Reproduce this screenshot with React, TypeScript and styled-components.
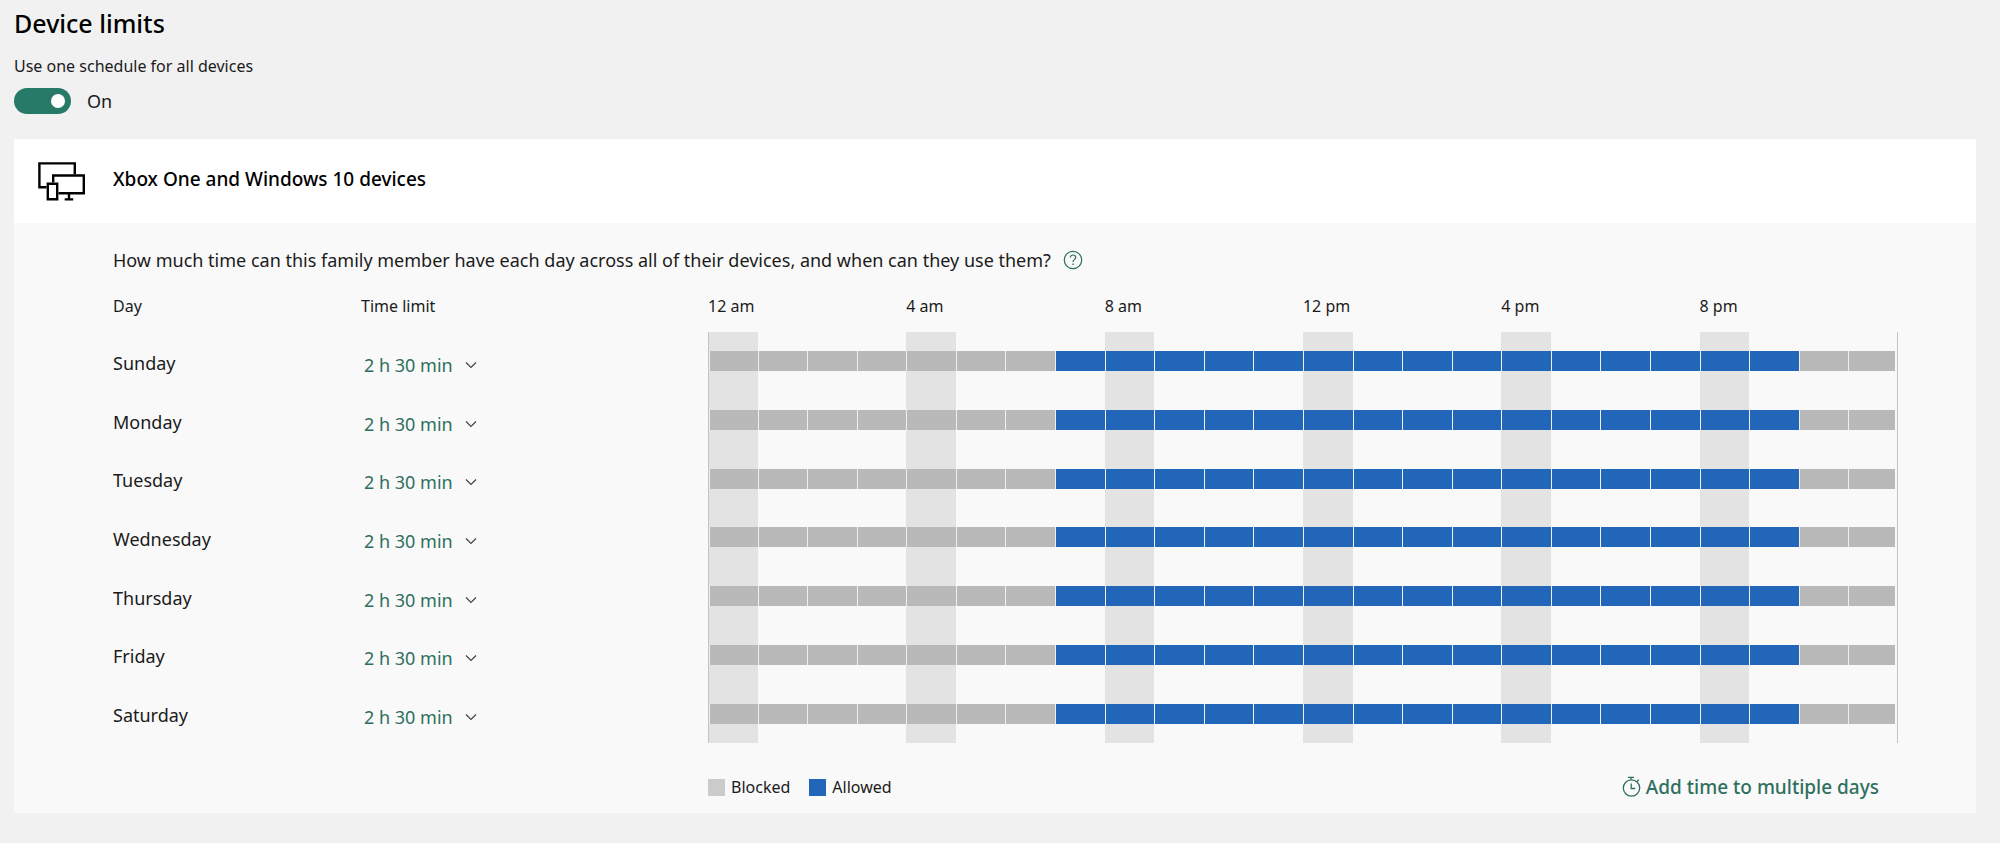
import React, { useState } from 'react';
import styled, { createGlobalStyle } from 'styled-components';

const color = {
  page: '#f1f1f1',
  panel: '#f9f9f9',
  text: '#1b1b1b',
  green: '#2f6f60',
  toggle: '#277a68',
  blocked: '#b9b9b9',
  allowed: '#2266ba',
  stripe: '#e3e3e3',
  rule: '#c4c4c4',
};

const DAY_WIDTH = 248;
const LIMIT_WIDTH = 347;

const GlobalStyle = createGlobalStyle`
  *, *::before, *::after { box-sizing: border-box; }
  body {
    margin: 0;
    background: ${color.page};
    color: ${color.text};
    font: 400 18px/24px "Noto Sans", "Open Sans", sans-serif;
  }
  button, select, input { font: inherit; }
`;

const Page = styled.main`
  padding: 7px 24px 30px 14px;
`;

const Title = styled.h1`
  margin: 0 0 15px;
  color: #000;
  font-size: 25px;
  line-height: 32px;
  font-weight: 500;
`;

const ToggleLabel = styled.label`
  display: block;
  font-size: 16px;
`;

const ToggleRow = styled.div`
  display: flex;
  align-items: center;
  gap: 16px;
  margin: 10px 0 25px;
`;

const Toggle = styled.input`
  appearance: none;
  display: flex;
  align-items: center;
  justify-content: flex-end;
  width: 57px;
  height: 26px;
  margin: 0;
  padding: 0 6px;
  border-radius: 13px;
  background: #8a8a8a;
  cursor: pointer;

  &::before {
    content: '';
    width: 14px;
    height: 14px;
    border-radius: 50%;
    background: #fff;
  }
  &:checked { background: ${color.toggle}; }
  &:not(:checked) { justify-content: flex-start; }
`;

const Card = styled.section`
  background: ${color.panel};
`;

const CardHeader = styled.header`
  display: flex;
  align-items: center;
  gap: 27px;
  height: 84px;
  padding: 0 24px;
  background: #fff;
`;

const CardTitle = styled.h2`
  margin: 0 0 4px;
  color: #000;
  font-size: 19px;
  line-height: 24px;
  font-weight: 500;
`;

const CardBody = styled.div`
  padding: 25px 78px 14px 99px;
`;

const Question = styled.div`
  display: flex;
  align-items: center;
  gap: 12px;
`;

const QuestionText = styled.p`
  margin: 0;
`;

const HelpButton = styled.button`
  display: flex;
  padding: 0;
  border: 0;
  background: none;
  color: ${color.green};
  cursor: pointer;
`;

const Schedule = styled.table`
  width: 100%;
  height: 471px;
  table-layout: fixed;
  border-collapse: separate;
  border-spacing: 0;
`;

const Column = styled.col<{ $width?: number }>`
  width: ${(p) => (p.$width ? `${p.$width}px` : 'auto')};
`;

const HeadCell = styled.th`
  height: 60px;
  padding: 8px 0 0;
  font-size: 16px;
  font-weight: 400;
  text-align: left;
`;

const DayCell = styled.th`
  padding: 3px 0 0;
  font-weight: 400;
  text-align: left;
`;

const LimitCell = styled.td`
  padding: 7px 0 0 3px;
`;

const SelectWrap = styled.span`
  display: inline-flex;
  align-items: center;
  color: ${color.green};
`;

const LimitSelect = styled.select`
  appearance: none;
  width: 116px;
  height: 24px;
  margin: 0 -15px 0 0;
  padding: 0;
  border: 0;
  background: none;
  color: inherit;
  cursor: pointer;
`;

const Chevron = styled.svg`
  pointer-events: none;
`;

const HourCell = styled.td<{ $striped: boolean }>`
  padding: 0;
  background: ${(p) => (p.$striped ? color.stripe : 'transparent')};

  &:nth-of-type(2) { border-left: 1px solid ${color.rule}; }
  &:last-child { padding-right: 2px; border-right: 1px solid ${color.rule}; }
`;

const HourBar = styled.div<{ $allowed: boolean }>`
  height: 20px;
  border-left: 1px solid #efefef;
  background: ${(p) => (p.$allowed ? color.allowed : color.blocked)};
`;

const Footer = styled.footer`
  display: flex;
  justify-content: space-between;
  align-items: center;
  padding: 32px 19px 0 ${DAY_WIDTH + LIMIT_WIDTH}px;
`;

const Legend = styled.ul`
  display: flex;
  gap: 19px;
  margin: 0;
  padding: 0;
  list-style: none;
  font-size: 16px;
`;

const LegendItem = styled.li<{ $color: string }>`
  display: flex;
  align-items: center;
  gap: 6px;

  &::before {
    content: '';
    width: 17px;
    height: 17px;
    background: ${(p) => p.$color};
  }
`;

const AddTime = styled.button`
  display: flex;
  align-items: center;
  gap: 5px;
  padding: 0;
  border: 0;
  background: none;
  color: ${color.green};
  font-size: 19px;
  line-height: 24px;
  font-weight: 500;
  cursor: pointer;
`;

const DevicesIcon = () => (
  <svg width="48" height="40" viewBox="0 0 48 40" fill="none" stroke="#000" strokeWidth="2.4" aria-hidden="true">
    <path d="M8.5 26.2H1.4V2.4H36.8V13.5" />
    <path d="M15.2 21.5V14.5H45.8V32.2H20.5" />
    <path d="M9.8 22.7H19.2V38.2H9.8Z" />
    <path d="M31 32.5V38.2M26.7 38.4H35.2" />
  </svg>
);

const HelpIcon = () => (
  <svg width="20" height="20" viewBox="0 0 20 20" fill="none" stroke="currentColor" strokeWidth="1.2" aria-hidden="true">
    <circle cx="10" cy="10" r="8.7" />
    <path d="M7.3 7.6C7.3 6 8.5 5 10 5s2.7 1 2.7 2.5C12.7 9.3 10 9.6 10 12.1" />
    <path d="M10 13.6v1.5" strokeWidth="1.4" />
  </svg>
);

const ChevronIcon = () => (
  <Chevron width="12" height="8" viewBox="0 0 12 8" fill="none" stroke="#444" strokeWidth="1.2" aria-hidden="true">
    <path d="M1 1.5l5 5 5-5" />
  </Chevron>
);

const StopwatchIcon = () => (
  <svg width="19" height="22" viewBox="0 0 19 22" fill="none" stroke="currentColor" strokeWidth="1.3" aria-hidden="true">
    <circle cx="9.5" cy="12" r="8.2" />
    <path d="M6 1.3h6M9 1.3v2.5M14.8 5.8l2-2M9.2 7.5v5h4" />
  </svg>
);

const days = ['Sunday', 'Monday', 'Tuesday', 'Wednesday', 'Thursday', 'Friday', 'Saturday'];
const hourLabels = ['12 am', '4 am', '8 am', '12 pm', '4 pm', '8 pm'];
const hours = Array.from({ length: 24 }, (_, hour) => hour);
const limits = ['2 h 30 min', '3 h', '3 h 30 min'];
const isAllowed = (hour: number) => hour >= 7 && hour < 22;

export default function App() {
  const [shared, setShared] = useState(true);

  return (
    <>
      <GlobalStyle />
      <Page>
        <Title>Device limits</Title>
        <ToggleLabel htmlFor="shared-schedule">Use one schedule for all devices</ToggleLabel>
        <ToggleRow>
          <Toggle
            id="shared-schedule"
            type="checkbox"
            role="switch"
            checked={shared}
            onChange={(e) => setShared(e.target.checked)}
          />
          <span>{shared ? 'On' : 'Off'}</span>
        </ToggleRow>

        <Card>
          <CardHeader>
            <DevicesIcon />
            <CardTitle>Xbox One and Windows 10 devices</CardTitle>
          </CardHeader>
          <CardBody>
            <Question>
              <QuestionText>
                How much time can this family member have each day across all of their devices, and when can they use them?
              </QuestionText>
              <HelpButton type="button" aria-label="Help">
                <HelpIcon />
              </HelpButton>
            </Question>

            <Schedule>
              <colgroup>
                <Column $width={DAY_WIDTH} />
                <Column $width={LIMIT_WIDTH} />
                {hours.map((hour) => (
                  <Column key={hour} />
                ))}
              </colgroup>
              <thead>
                <tr>
                  <HeadCell scope="col">Day</HeadCell>
                  <HeadCell scope="col">Time limit</HeadCell>
                  {hourLabels.map((label) => (
                    <HeadCell key={label} scope="colgroup" colSpan={4}>
                      {label}
                    </HeadCell>
                  ))}
                </tr>
              </thead>
              <tbody>
                {days.map((day) => (
                  <tr key={day}>
                    <DayCell scope="row">{day}</DayCell>
                    <LimitCell>
                      <SelectWrap>
                        <LimitSelect aria-label={`Time limit for ${day}`}>
                          {limits.map((limit) => (
                            <option key={limit}>{limit}</option>
                          ))}
                        </LimitSelect>
                        <ChevronIcon />
                      </SelectWrap>
                    </LimitCell>
                    {hours.map((hour) => (
                      <HourCell key={hour} $striped={hour % 4 === 0}>
                        <HourBar $allowed={isAllowed(hour)} />
                      </HourCell>
                    ))}
                  </tr>
                ))}
              </tbody>
            </Schedule>

            <Footer>
              <Legend>
                <LegendItem $color="#cbcbcb">Blocked</LegendItem>
                <LegendItem $color={color.allowed}>Allowed</LegendItem>
              </Legend>
              <AddTime type="button">
                <StopwatchIcon />
                Add time to multiple days
              </AddTime>
            </Footer>
          </CardBody>
        </Card>
      </Page>
    </>
  );
}
